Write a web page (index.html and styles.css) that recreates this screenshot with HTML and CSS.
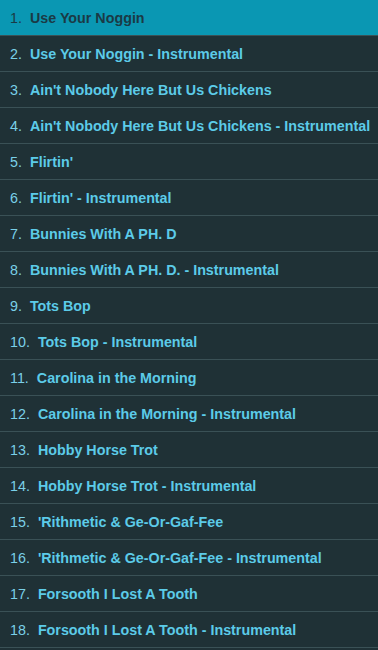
FILE: index.html
```html
<!DOCTYPE html>
<html lang="en">
<head>
    <meta charset="UTF-8">
    <meta name="viewport" content="width=device-width, initial-scale=1.0">
    <title>Track List</title>
    <link rel="stylesheet" href="styles.css">
</head>
<body>
    <ul class="tracks">
        <li class="track active"><span class="num">1.</span><span class="title">Use Your Noggin</span></li>
        <li class="track"><span class="num">2.</span><span class="title">Use Your Noggin - Instrumental</span></li>
        <li class="track"><span class="num">3.</span><span class="title">Ain't Nobody Here But Us Chickens</span></li>
        <li class="track"><span class="num">4.</span><span class="title">Ain't Nobody Here But Us Chickens - Instrumental</span></li>
        <li class="track"><span class="num">5.</span><span class="title">Flirtin'</span></li>
        <li class="track"><span class="num">6.</span><span class="title">Flirtin' - Instrumental</span></li>
        <li class="track"><span class="num">7.</span><span class="title">Bunnies With A PH. D</span></li>
        <li class="track"><span class="num">8.</span><span class="title">Bunnies With A PH. D. - Instrumental</span></li>
        <li class="track"><span class="num">9.</span><span class="title">Tots Bop</span></li>
        <li class="track"><span class="num">10.</span><span class="title">Tots Bop - Instrumental</span></li>
        <li class="track"><span class="num">11.</span><span class="title">Carolina in the Morning</span></li>
        <li class="track"><span class="num">12.</span><span class="title">Carolina in the Morning - Instrumental</span></li>
        <li class="track"><span class="num">13.</span><span class="title">Hobby Horse Trot</span></li>
        <li class="track"><span class="num">14.</span><span class="title">Hobby Horse Trot - Instrumental</span></li>
        <li class="track"><span class="num">15.</span><span class="title">'Rithmetic &amp; Ge-Or-Gaf-Fee</span></li>
        <li class="track"><span class="num">16.</span><span class="title">'Rithmetic &amp; Ge-Or-Gaf-Fee - Instrumental</span></li>
        <li class="track"><span class="num">17.</span><span class="title">Forsooth I Lost A Tooth</span></li>
        <li class="track"><span class="num">18.</span><span class="title">Forsooth I Lost A Tooth - Instrumental</span></li>
    </ul>
</body>
</html>
```

FILE: styles.css
```css
body {
    margin: 0;
    background-color: #1f3136;
    font-family: "Liberation Sans", Arial, sans-serif;
}
.tracks {
    list-style: none;
    margin: 0;
    padding: 0;
}
.track {
    height: 35px;
    border-bottom: 1px solid #3a5156;
    display: flex;
    align-items: center;
    padding-left: 10px;
    font-size: 14.3px;
    color: #5ccbe8;
    white-space: nowrap;
}
.track .num {
    margin-right: 8px;
    color: #7ad0e8;
}
.track .title {
    font-weight: bold;
}
.track.active {
    background-color: #0a97b3;
    color: #1b3a45;
}
.track.active .num {
    color: #1b3a45;
}
```
